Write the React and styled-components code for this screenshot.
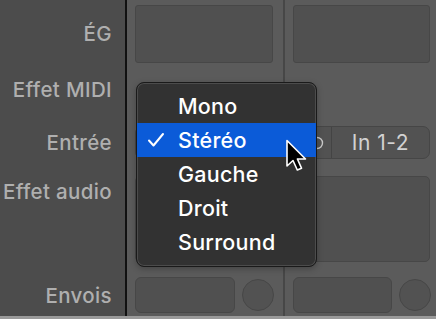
import React from "react";
import styled, { createGlobalStyle } from "styled-components";

const Global = createGlobalStyle`
  html, body { margin: 0; padding: 0; background: #4c4c4c; }
  body { width: 436px; height: 319px; overflow: hidden; font-family: Inter, "Noto Sans", sans-serif; }
`;

const Window = styled.div`
  position: relative;
  width: 436px;
  height: 319px;
  display: flex;
  flex-direction: column;
  overflow: hidden;
`;

const Panes = styled.div`
  display: flex;
  height: 316px;
`;

const BottomEdge = styled.div`
  height: 3px;
  background: #9a9a9a;
`;

const Column = styled.div`
  display: flex;
  flex-direction: column;
  width: ${(p) => p.$w}px;
  background: ${(p) => p.$bg};
  padding-left: ${(p) => p.$pl || 0}px;
  box-sizing: border-box;
`;

const Rule = styled.div`
  width: 2px;
  background: ${(p) => p.$c};
`;

const Slot = styled.div`
  height: ${(p) => p.$h}px;
  display: flex;
  flex-direction: column;
  padding-top: ${(p) => p.$pt || 0}px;
  box-sizing: border-box;
`;

const Label = styled.div`
  text-align: right;
  padding-right: 13px;
  font-size: 20.5px;
  font-weight: 500;
  letter-spacing: 0.35px;
  color: #afafaf;
  line-height: 22px;
  white-space: nowrap;
`;

const Box = styled.div`
  width: ${(p) => p.$w}px;
  height: ${(p) => p.$h}px;
  background: #505050;
  border: 1px solid #474747;
  border-radius: ${(p) => p.$r || 3}px;
  box-sizing: border-box;
`;

const SendRow = styled.div`
  display: flex;
  align-items: center;
  gap: 7px;
`;

const Knob = styled.div`
  width: 32px;
  height: 32px;
  border-radius: 50%;
  background: #525252;
  border: 1px solid #474747;
  box-sizing: border-box;
`;

const InputButton = styled.div`
  width: ${(p) => p.$w}px;
  height: 33px;
  display: flex;
  background: #525252;
  border: 1px solid #464646;
  border-radius: 7px;
  box-sizing: border-box;
  overflow: hidden;
`;

const FormatPart = styled.div`
  width: 37px;
  display: flex;
  align-items: center;
  justify-content: center;
  border-right: 1px solid #444;
`;

const InputPart = styled.div`
  flex: 1;
  display: flex;
  align-items: center;
  justify-content: center;
  font-size: 21px;
  font-weight: 400;
  letter-spacing: 0.5px;
  color: #d2d2d2;
`;

const Menu = styled.div`
  position: absolute;
  left: 136px;
  top: 82px;
  width: 181px;
  height: 185px;
  background: #323232;
  border: 1px solid #1a1a1a;
  border-radius: 8px;
  box-shadow: inset 0 0 0 1px rgba(255, 255, 255, 0.13), 0 2px 6px rgba(0, 0, 0, 0.25);
  box-sizing: border-box;
  padding: 6px 0 0;
  display: flex;
  flex-direction: column;
`;

const Item = styled.div`
  height: 34px;
  display: flex;
  align-items: center;
  padding-left: 41px;
  position: relative;
  font-size: 21.5px;
  font-weight: 500;
  letter-spacing: 0.25px;
  color: #ffffff;
  background: ${(p) => (p.$active ? "#0b5bd8" : "transparent")};
`;

const Check = styled.span`
  position: absolute;
  left: 10px;
  top: 0;
  bottom: 0;
  display: flex;
  align-items: center;
`;

const Cursor = styled.svg`
  position: absolute;
  left: 285px;
  top: 139px;
`;

function StereoIcon() {
  return (
    <svg width="22" height="14" viewBox="0 0 22 14">
      <circle cx="7" cy="7" r="5.5" fill="none" stroke="#c9c9c9" strokeWidth="1.4" />
      <circle cx="15" cy="7" r="5.5" fill="none" stroke="#c9c9c9" strokeWidth="1.4" />
    </svg>
  );
}

function Strip({ w, pl, boxW }) {
  return (
    <Column $w={w} $bg="#5b5b5b" $pl={pl}>
      <Slot $h={68} $pt={5}>
        <Box $w={boxW} $h={58} />
      </Slot>
      <Slot $h={52} />
      <Slot $h={46} $pt={6}>
        <InputButton $w={boxW}>
          <FormatPart>
            <StereoIcon />
          </FormatPart>
          <InputPart>In 1-2</InputPart>
        </InputButton>
      </Slot>
      <Slot $h={104} $pt={10}>
        <Box $w={boxW} $h={86} $r={5} />
      </Slot>
      <Slot $h={46} $pt={7}>
        <SendRow>
          <Box $w={boxW - 38} $h={36} $r={6} />
          <Knob />
        </SendRow>
      </Slot>
    </Column>
  );
}

export default function App() {
  const items = ["Mono", "Stéréo", "Gauche", "Droit", "Surround"];
  return (
    <>
      <Global />
      <Window>
        <Panes>
          <Column $w={125} $bg="#4c4c4c">
            <Slot $h={68} $pt={23}>
              <Label>ÉG</Label>
            </Slot>
            <Slot $h={52} $pt={11}>
              <Label>Effet MIDI</Label>
            </Slot>
            <Slot $h={46} $pt={12}>
              <Label>Entrée</Label>
            </Slot>
            <Slot $h={104} $pt={15}>
              <Label>Effet audio</Label>
            </Slot>
            <Slot $h={46} $pt={15}>
              <Label>Envois</Label>
            </Slot>
          </Column>
          <Rule $c="#111111" />
          <Strip w={156} pl={8} boxW={138} />
          <Rule $c="#474747" />
          <Strip w={151} pl={8} boxW={137} />
        </Panes>
        <BottomEdge />
        <Menu>
          {items.map((it) => (
            <Item key={it} $active={it === "Stéréo"}>
              {it === "Stéréo" && (
                <Check>
                  <svg width="18" height="16" viewBox="0 0 18 16">
                    <path d="M2 8.5 L6.5 13.5 L16 2" fill="none" stroke="#fff" strokeWidth="2" strokeLinecap="round" strokeLinejoin="round" />
                  </svg>
                </Check>
              )}
              {it}
            </Item>
          ))}
        </Menu>
        <Cursor width="26" height="36" viewBox="0 0 26 36">
          <path
            d="M2 1.5 L2 27 L8 21.5 L12.3 31 L16.5 29.2 L12.4 20 L20.5 20 Z"
            fill="#000"
            stroke="#fff"
            strokeWidth="1.6"
            strokeLinejoin="round"
          />
        </Cursor>
      </Window>
    </>
  );
}
